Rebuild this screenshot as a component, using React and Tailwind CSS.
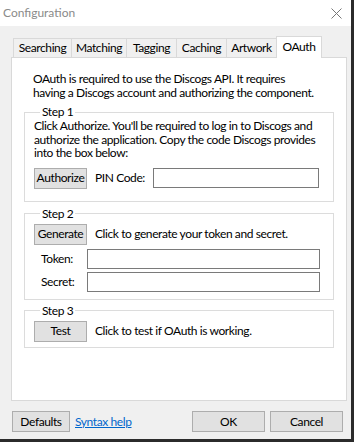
import React from 'react';

const font = { fontFamily: 'Lato, "Noto Sans", sans-serif' };

function Btn({ children, className = '' }) {
    return (
        <div className={`h-[21px] flex items-center justify-center bg-[#e1e1e1] border border-[#adadad] text-[12px] text-black ${className}`}>
            {children}
        </div>
    );
}

function Input({ className = '' }) {
    return <div className={`h-[20px] bg-white border border-[#7a7a7a] ${className}`} />;
}

function Group({ label, children, className = '' }) {
    return (
        <fieldset className={`min-w-0 border border-[#dcdcdc] px-[9px] ${className}`}>
            <legend className="ml-[6px] px-[2px] leading-[14px]">{label}</legend>
            {children}
        </fieldset>
    );
}

const tabs = [
    ['Searching', 'w-[59px]'],
    ['Matching', 'w-[56px]'],
    ['Tagging', 'w-[51px]'],
    ['Caching', 'w-[51px]'],
    ['Artwork', 'w-[51px]'],
];

export default function App() {
    return (
        <div className="w-[354px] h-[442px] bg-[#2b2b2b] text-[12px] tracking-[-0.4px] text-black" style={font}>
            <div className="w-[351px] h-[439px] flex flex-col bg-[#f0f0f0]">
                {/* title bar */}
                <div className="h-[26px] bg-white flex items-center justify-between pl-[3px] pr-[9px]">
                    <span className="text-[12px] tracking-normal text-[#8a8a8a]">Configuration</span>
                    <svg width="11" height="11" viewBox="0 0 11 11" className="mt-[1px]">
                        <path d="M0.5 0.5 L10.5 10.5 M10.5 0.5 L0.5 10.5" stroke="#777" strokeWidth="1" />
                    </svg>
                </div>

                {/* tabs */}
                <div className="flex items-end pl-[13px] mt-[9px] h-[22px]">
                    {tabs.map(([t, w]) => (
                        <div key={t} className={`${w} h-[19px] flex items-center justify-center border border-b-0 border-[#d9d9d9] -ml-px first:ml-0 bg-[#f0f0f0]`}>
                            {t}
                        </div>
                    ))}
                    <div className="w-[46px] h-[22px] pb-[2px] flex items-center justify-center border border-b-0 border-[#d9d9d9] -ml-px bg-white relative top-px z-10">
                        OAuth
                    </div>
                </div>

                {/* panel */}
                <div className="ml-[11px] w-[336px] h-[344px] bg-white border border-[#d9d9d9] px-[12px] pt-[14px] flex flex-col">
                    <p className="ml-[9px] leading-[13.5px] whitespace-nowrap">
                        OAuth is required to use the Discogs API. It requires<br />
                        having a Discogs account and authorizing the component.
                    </p>

                    <Group label="Step 1" className="mt-[6px] pb-[12px]">
                        <p className="leading-[13.5px] whitespace-nowrap">
                            Click Authorize. You'll be required to log in to Discogs and<br />
                            authorize the application. Copy the code Discogs provides<br />
                            into the box below:
                        </p>
                        <div className="flex items-center mt-[8px]">
                            <Btn className="w-[53px]">Authorize</Btn>
                            <span className="ml-[8px]">PIN Code:</span>
                            <Input className="ml-auto mr-[5px] w-[166px]" />
                        </div>
                    </Group>

                    <Group label="Step 2" className="mt-[5px] pb-[7px]">
                        <div className="flex items-center mt-[3px]">
                            <Btn className="w-[53px]">Generate</Btn>
                            <span className="ml-[8px]">Click to generate your token and secret.</span>
                        </div>
                        <div className="flex items-center mt-[4px]">
                            <span className="ml-[7px]">Token:</span>
                            <Input className="ml-auto mr-[4px] w-[233px]" />
                        </div>
                        <div className="flex items-center mt-[3px]">
                            <span className="ml-[7px]">Secret:</span>
                            <Input className="ml-auto mr-[4px] w-[233px]" />
                        </div>
                    </Group>

                    <Group label="Step 3" className="mt-[4px] pb-[5px]">
                        <div className="flex items-center mt-[3px]">
                            <Btn className="w-[53px]">Test</Btn>
                            <span className="ml-[8px]">Click to test if OAuth is working.</span>
                        </div>
                    </Group>
                </div>

                {/* bottom buttons */}
                <div className="flex items-center mt-[10px] pl-[12px] pr-[8px]">
                    <Btn className="w-[58px] h-[20px]">Defaults</Btn>
                    <span className="ml-[5px] text-[#0066cc] underline">Syntax help</span>
                    <Btn className="ml-auto w-[73px] h-[20px]">OK</Btn>
                    <Btn className="ml-[5px] w-[73px] h-[20px]">Cancel</Btn>
                </div>
            </div>
        </div>
    );
}
